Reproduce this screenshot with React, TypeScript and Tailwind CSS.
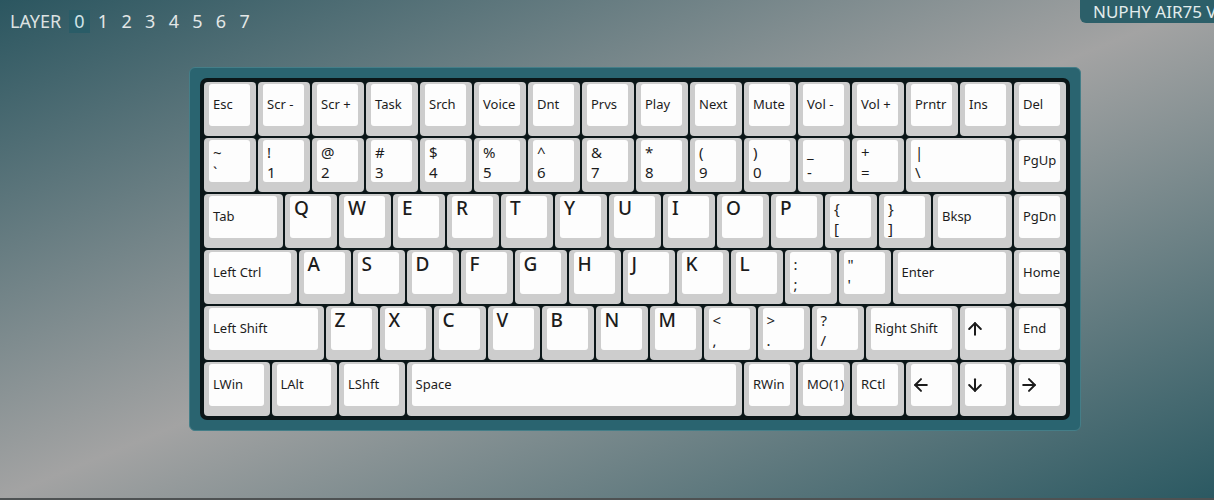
import { ArrowUp, ArrowDown, ArrowLeft, ArrowRight } from 'lucide-react'

type Key = {
  label?: string
  top?: string
  bottom?: string
  letter?: boolean
  icon?: 'up' | 'down' | 'left' | 'right'
  w?: number
}

const widths: Record<string, string> = {
  '1': 'w-[54px]',
  '1.25': 'w-[67.5px]',
  '1.5': 'w-[81px]',
  '1.75': 'w-[94.5px]',
  '2': 'w-[108px]',
  '2.25': 'w-[121.5px]',
  '6.25': 'w-[337.5px]',
}

const txt = (label: string, w?: number): Key => ({ label, w })
const dual = (top: string, bottom: string, w?: number): Key => ({ top, bottom, w })
const letters = (s: string): Key[] => s.split('').map((c) => ({ label: c, letter: true }))

const rows: Key[][] = [
  ['Esc', 'Scr -', 'Scr +', 'Task', 'Srch', 'Voice', 'Dnt', 'Prvs', 'Play', 'Next', 'Mute', 'Vol -', 'Vol +', 'Prntr', 'Ins', 'Del'].map((t) => txt(t)),
  [
    dual('~', '`'),
    dual('!', '1'),
    dual('@', '2'),
    dual('#', '3'),
    dual('$', '4'),
    dual('%', '5'),
    dual('^', '6'),
    dual('&', '7'),
    dual('*', '8'),
    dual('(', '9'),
    dual(')', '0'),
    dual('_', '-'),
    dual('+', '='),
    dual('|', '\\', 2),
    txt('PgUp'),
  ],
  [txt('Tab', 1.5), ...letters('QWERTYUIOP'), dual('{', '['), dual('}', ']'), txt('Bksp', 1.5), txt('PgDn')],
  [txt('Left Ctrl', 1.75), ...letters('ASDFGHJKL'), dual(':', ';'), dual('"', "'"), txt('Enter', 2.25), txt('Home')],
  [txt('Left Shift', 2.25), ...letters('ZXCVBNM'), dual('<', ','), dual('>', '.'), dual('?', '/'), txt('Right Shift', 1.75), { icon: 'up' }, txt('End')],
  [
    txt('LWin', 1.25),
    txt('LAlt', 1.25),
    txt('LShft', 1.25),
    txt('Space', 6.25),
    txt('RWin'),
    txt('MO(1)'),
    txt('RCtl'),
    { icon: 'left' },
    { icon: 'down' },
    { icon: 'right' },
  ],
]

const icons = { up: ArrowUp, down: ArrowDown, left: ArrowLeft, right: ArrowRight }

function Keycap({ k }: { k: Key }) {
  const Icon = k.icon ? icons[k.icon] : null
  return (
    <div className={`${widths[String(k.w ?? 1)]} h-[56px] shrink-0 p-[1px]`}>
      <div className="h-full rounded-[4px] bg-[#cdcdcd] pl-[5px] pr-[6px] pt-[2px] pb-[10px]">
        <div className="h-full rounded-[3px] bg-[#fdfdfd] text-[#1c1c1c] overflow-hidden">
          {Icon ? (
            <div className="h-full flex items-center">
              <Icon size={20} strokeWidth={2.4} />
            </div>
          ) : k.letter ? (
            <div className="pl-[4px] text-[19px] leading-[24px] font-medium">{k.label}</div>
          ) : k.top !== undefined ? (
            <div className="pl-[4px] pt-[2px] text-[15px] leading-[20px]">
              <div>{k.top}</div>
              <div>{k.bottom}</div>
            </div>
          ) : (
            <div className="h-full flex items-center pl-[4px] text-[13px] whitespace-nowrap">{k.label}</div>
          )}
        </div>
      </div>
    </div>
  )
}

export default function App() {
  const layers = ['0', '1', '2', '3', '4', '5', '6', '7']
  return (
    <div
      className="relative w-[1214px] h-[500px] overflow-hidden border-b-2 border-[#4e5253] bg-[linear-gradient(to_bottom_right,#2b5660_0%,#a3a3a3_50%,#2b5962_100%)] pt-[10px]"
      style={{ fontFamily: '"Noto Sans", "Open Sans", sans-serif' }}
    >
      <div className="flex items-center h-[23px] pl-[10px]">
        <span className="text-[18px] text-[#dde2e2] mr-[8px]">LAYER</span>
        <div className="flex gap-[3.3px]">
          {layers.map((l, i) => (
            <span
              key={l}
              className={`h-[23px] leading-[23px] px-[5px] text-[18px] ${
                i === 0 ? 'bg-[#2a5c67] text-[#cfe4e8]' : 'text-[#e3e7e7]'
              }`}
            >
              {l}
            </span>
          ))}
        </div>
      </div>

      <div className="absolute left-[1080px] top-0 h-[23px] rounded-bl-[6px] bg-[#2c5f69] pl-[13px] pr-4 text-[17px] leading-[23px] text-[#e2ecec] whitespace-nowrap">
        NUPHY AIR75 V2
      </div>

      <div className="ml-[189px] mt-[34px] w-[892px] rounded-[6px] border border-[#447e88] bg-[#2a6470] p-[10px]">
        <div className="rounded-[7px] bg-[#0b1618] p-[3px]">
          {rows.map((row, r) => (
            <div key={r} className="flex">
              {row.map((k, i) => (
                <Keycap key={i} k={k} />
              ))}
            </div>
          ))}
        </div>
      </div>
    </div>
  )
}
